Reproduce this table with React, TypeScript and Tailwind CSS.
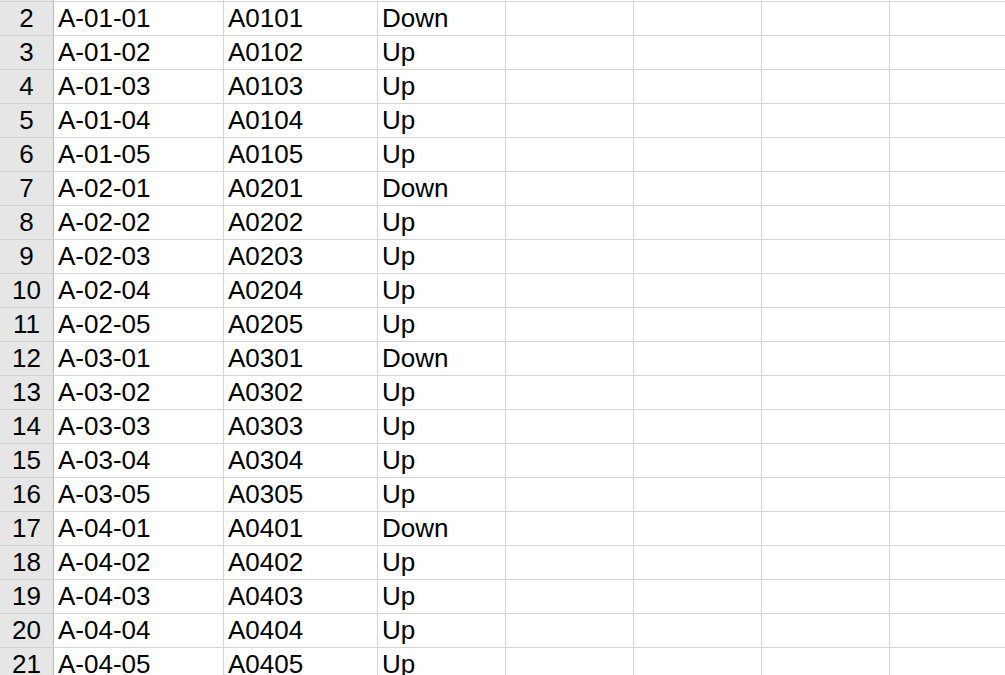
import React from 'react';

const rows = Array.from({ length: 20 }, (_, i) => {
  const n = i + 2;
  const grp = Math.floor(i / 5) + 1;
  const idx = (i % 5) + 1;
  const g = String(grp).padStart(2, '0');
  const s = String(idx).padStart(2, '0');
  return { n, loc: `A-${g}-${s}`, code: `A${g}${s}`, dir: idx === 1 ? 'Down' : 'Up' };
});

const cell = 'h-[34px] border-r border-b border-[#d4d4d4] pl-[4px] leading-[33px] whitespace-nowrap overflow-hidden';

const App: React.FC = () => {
  return (
    <div className="h-[675px] w-[1005px] overflow-hidden bg-white text-[26px] text-black" style={{ fontFamily: '"Liberation Sans", Arial, sans-serif' }}>
      <div className="grid grid-cols-[54px_170px_154px_128px_128px_128px_128px_128px]">
        {/* tail of row 1 */}
        <div className="h-[2px] border-r border-b border-r-[#bdbdbd] border-b-[#d0d0d0] bg-[#e6e6e6]" />
        {Array.from({ length: 7 }).map((_, i) => (
          <div key={i} className="h-[2px] border-r border-b border-[#d4d4d4]" />
        ))}

        {rows.map((r) => (
          <React.Fragment key={r.n}>
            <div className="h-[34px] border-r border-b border-r-[#bdbdbd] border-b-[#d0d0d0] bg-[#e6e6e6] text-center leading-[33px]">
              {r.n}
            </div>
            <div className={cell}>{r.loc}</div>
            <div className={cell}>{r.code}</div>
            <div className={cell}>{r.dir}</div>
            <div className={cell} />
            <div className={cell} />
            <div className={cell} />
            <div className={cell} />
          </React.Fragment>
        ))}
      </div>
    </div>
  );
};

export default App;
